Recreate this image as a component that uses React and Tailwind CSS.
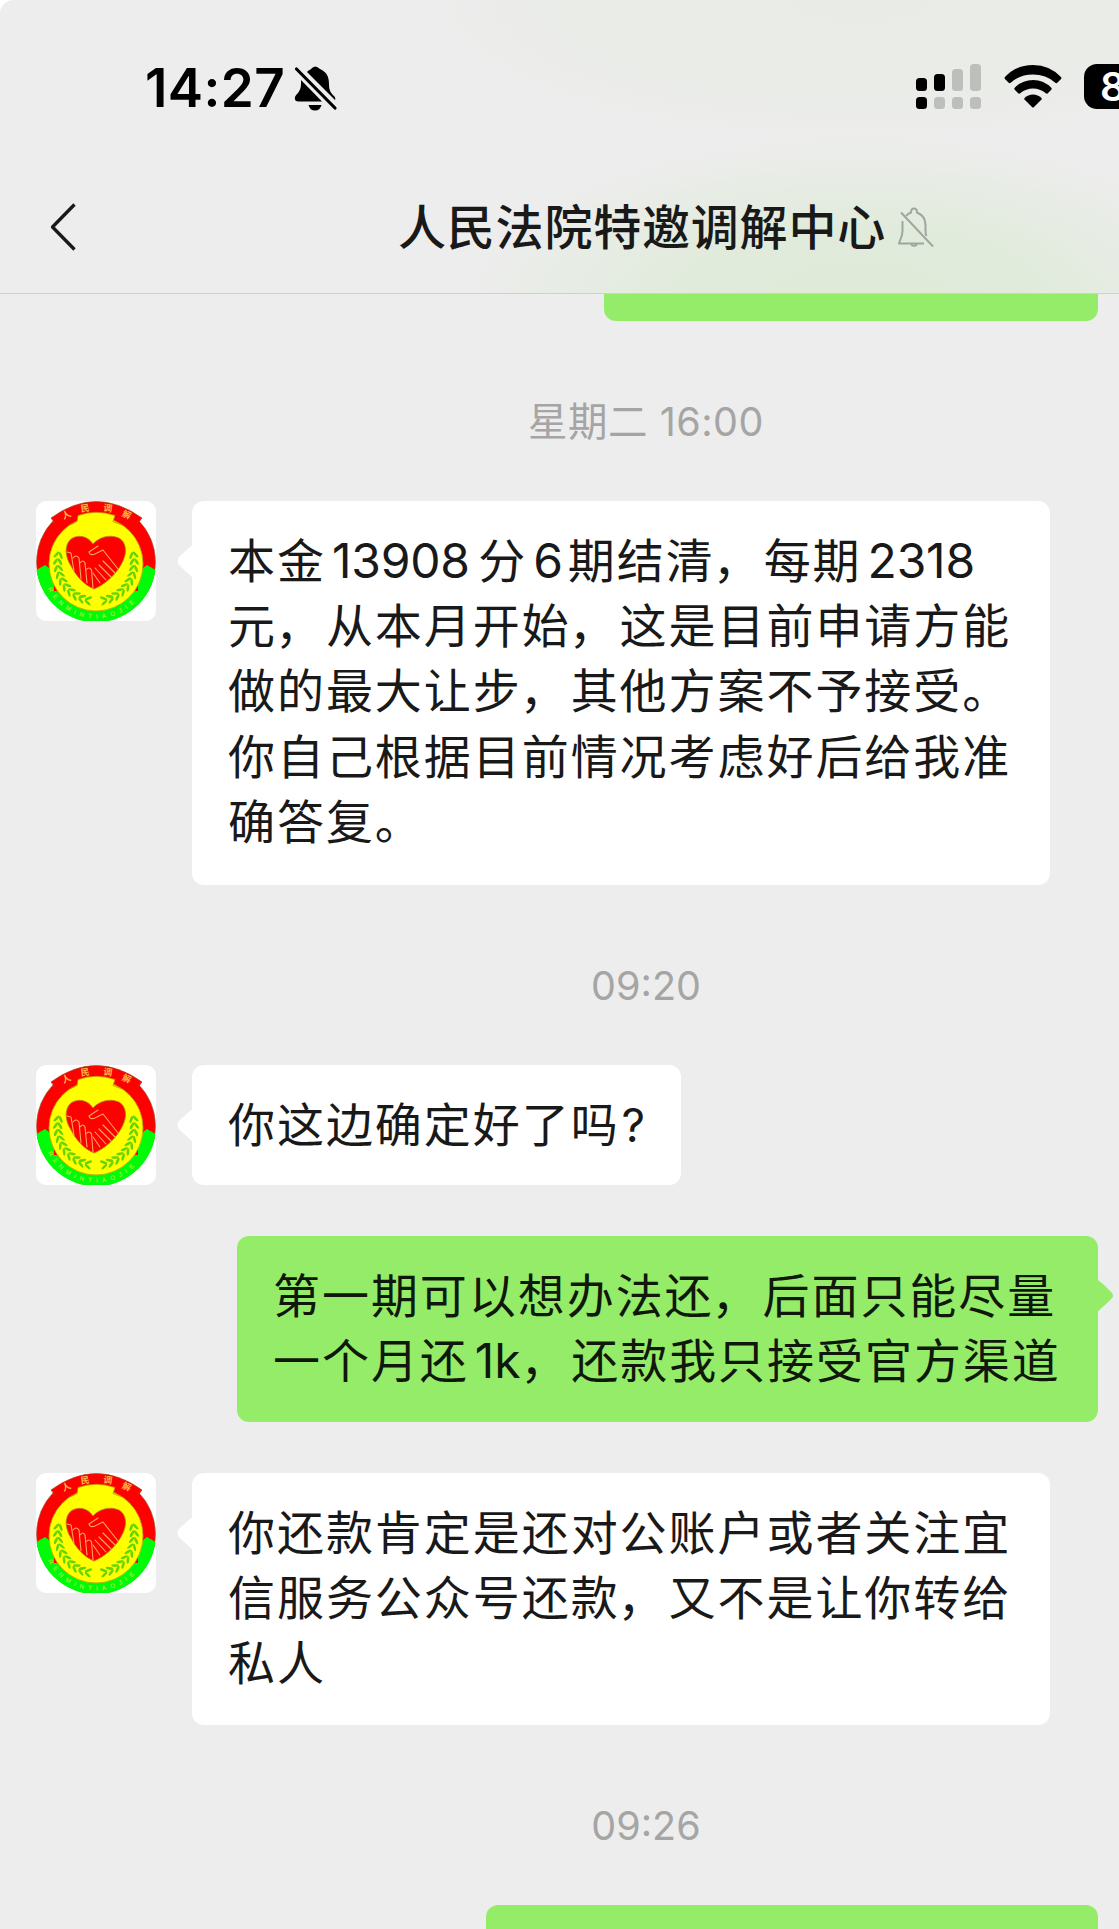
import React from 'react';

const messages = [
  { type: 'time', text: '星期二 16:00', className: 'mt-[81px] tracking-[0.5px]' },
  {
    type: 'left',
    className: 'mt-[59px] h-[384px]',
    width: 'w-[858px]',
    lines: [
      '本金13908分6期结清，每期2318',
      '元，从本月开始，这是目前申请方能',
      '做的最大让步，其他方案不予接受。',
      '你自己根据目前情况考虑好后给我准',
      '确答复。'
    ]
  },
  { type: 'time', text: '09:20', className: 'mt-[81px]' },
  { type: 'left', className: 'mt-[59px] h-[120px]', width: 'w-[489px]', lines: ['你这边确定好了吗?'] },
  {
    type: 'right',
    className: 'mt-[51px] h-[186px]',
    width: 'w-[861px]',
    lines: ['第一期可以想办法还，后面只能尽量', '一个月还1k，还款我只接受官方渠道']
  },
  {
    type: 'left',
    className: 'mt-[51px] h-[252px]',
    width: 'w-[858px]',
    lines: ['你还款肯定是还对公账户或者关注宜', '信服务公众号还款，又不是让你转给', '私人']
  },
  { type: 'time', text: '09:26', className: 'mt-[81px]' }
];

// Leaf positions along the wreath, in degrees from the bottom of the badge
const leaves = [12, 22, 32, 42, 52, 62, 72, 82, 92, 102];

function Wreath() {
  return (
    <g fill="#62d400">
      {leaves.map((deg) => (
        <g key={deg} transform={`rotate(${deg} 60 62)`}>
          <ellipse cx="60" cy="102.500" rx="3.800" ry="1.300" transform="rotate(32 60 102.500)" />
          <ellipse cx="60" cy="98" rx="3.800" ry="1.300" transform="rotate(-32 60 98)" />
        </g>
      ))}
    </g>
  );
}

function Avatar() {
  return (
    <svg viewBox="0 0 120 120" className="h-[120px] w-[120px] shrink-0 rounded-[10px] bg-white">
      <defs>
        <path id="ringText" d="M10 84 A 54 54 0 0 0 110 84" />
      </defs>
      {/* Ring and banner */}
      <circle cx="60" cy="61" r="59.5" fill="#fe0000" stroke="#8f6a3a" strokeWidth="0.6" />
      <path d="M15 17 Q60 -16 106 17 L102 23 L105 32 L16 32 L19 22 Z" fill="#fe0000" />
      <path d="M19 22.500 L15 17 Q60 -16 106 17 L101 22.500" fill="none" stroke="#a44a2a" strokeWidth="0.7" />
      <path d="M0.5 69 L9 64 L18 71 L18 90 L102 90 L102 71 L111 64 L119.5 69 A60 60 0 0 1 0.5 69 Z" fill="#00fb08" />
      <circle cx="60" cy="63" r="47" fill="#ffff00" stroke="#b9a600" strokeWidth="0.8" />
      <path d="M41 21 L42 14.5 Q60 8 79 14.5 L77 21 L84 30 H36 Z" fill="#ffff00" />
      <path d="M34 24 L41 20.5 L42 14.5 Q60 8 79 14.5 L77 20.5 L86 24" fill="none" stroke="#c48a00" strokeWidth="0.8" />

      <g fill="#ffb648" fontFamily="Noto Sans CJK SC" fontWeight="700" fontSize="9" textAnchor="middle">
        <text x="30" y="17" transform="rotate(-24 30 13)">人</text>
        <text x="49" y="10.500" transform="rotate(-8 49 7)">民</text>
        <text x="72" y="10.500" transform="rotate(8 72 7)">调</text>
        <text x="91" y="17" transform="rotate(24 91 13)">解</text>
      </g>

      <Wreath />
      <g transform="matrix(-1 0 0 1 120 0)">
        <Wreath />
      </g>

      {/* Heart with the handshake */}
      <path
        d="M57 43 C52 35 42 33 35 38 C28 44 29 56 35 65 C40 75 48 84 58 88 C68 84 80 74 86 62 C92 51 90 41 83 37 C74 33 63 36 57 43 Z"
        fill="#fe0000"
        stroke="#b98a00"
        strokeWidth="0.8"
      />
      <g fill="none" stroke="#ffa45c" strokeWidth="1.1" strokeLinecap="round" strokeLinejoin="round">
        <path d="M62 45 L53 51 Q54 55 59 53 L67 49 L82 68" />
        <path d="M31 51 L35 52 L38 70 M37 57 Q40 53 43 57 L45 78 M44 62 Q47 58 49 62 L51 82 M50 69 Q53 65 55.500 69 L57 87" />
        <path d="M57 72 L64 82 M59 67 L70 79 M63 64 L75 76 M67 60 L79 72" />
      </g>

      <text fill="#98ee30" fontFamily="Liberation Sans" fontWeight="700" fontSize="6.500" letterSpacing="4.300">
        <textPath href="#ringText" startOffset="4">RENMINTIAOJIE</textPath>
      </text>
    </svg>
  );
}

function partClass(part) {
  if (part === '，') return 'relative right-[2px]';
  if (part === '?') return "ml-[2px] font-['Inter'] text-[46px] tracking-normal";
  if (part.endsWith('k')) return "ml-[6px] mr-[2px] font-['Inter'] text-[48px] tracking-[-0.2px]";
  if (part.length === 1 && /\d/.test(part)) return "ml-[6px] mr-[5px] font-['Inter'] text-[48px] tracking-[-0.2px]";
  if (/^\d/.test(part)) return "ml-[6px] mr-[8.5px] font-['Inter'] text-[48px] tracking-[-0.2px]";
  return '';
}

function Line({ text }) {
  return (
    <div className="h-[65.2px] whitespace-nowrap">
      {text.split(/([0-9k?]+|，)/).map((part, i) => (
        <span key={i} className={partClass(part)}>{part}</span>
      ))}
    </div>
  );
}

function Tail({ side }) {
  return side === 'left' ? (
    <svg viewBox="0 0 16 40" className="absolute top-[40px] -left-[15px] h-[40px] w-[16px] fill-white">
      <path d="M16 3 C14 6 9 9 2 16 Q-1 20 2 24 C9 31 14 34 16 38 Z" />
    </svg>
  ) : (
    <svg viewBox="0 0 17 40" className="absolute top-[40px] -right-[16px] h-[40px] w-[17px] fill-[#95ec69]">
      <path d="M0 3 C2 5 8 9 15 17 Q17 20 15 22 C8 30 3 32 0 37 Z" />
    </svg>
  );
}

function Message({ item }) {
  if (item.type === 'time') {
    return (
      <div className={`flex h-[40px] w-[1290px] items-center justify-center pt-[2px] pl-[2px] text-[39.5px] text-[#a5a5a5] ${item.className}`}>
        {item.text}
      </div>
    );
  }

  const isLeft = item.type === 'left';
  return (
    <div className={`flex ${isLeft ? 'gap-[36px] pl-[36px]' : 'justify-end pr-[21px]'} ${item.className}`}>
      {isLeft && <Avatar />}
      <div
        className={`relative h-full rounded-[12px] pt-[27px] pl-[36px] text-[47px] leading-[65.2px] tracking-[1.95px] ${item.width} ${
          isLeft ? 'bg-white text-[#191919]' : 'bg-[#95ec69] text-[#0f180b]'
        }`}
      >
        <Tail side={item.type} />
        {item.lines.map((line) => (
          <Line key={line} text={line} />
        ))}
      </div>
    </div>
  );
}

function StatusBar() {
  return (
    <div className="flex h-[175px] items-start pt-[64px] pl-[145px] text-black">
      <div className="pt-px text-[53px] leading-[46px] font-semibold tracking-[0.4px]">14:27</div>
      <svg viewBox="0 0 44 46" className="mt-[1px] ml-[9px] h-[46px] w-[44px]">
        <path d="M13 7 C14 5.500 16 5 17 4 Q21 -1 26 4 C33 7 35 12 35 19 C35 26 37 28 40 31 Q42 33 41 35 Z" />
        <path d="M7 15 L28 36.500 H4 Q0 36 1 32 C2 29 7 27 7 19 Z" />
        <path d="M14.500 40 H27.500 Q26 45.500 21 45.500 Q16 45.500 14.500 40 Z" />
        <path d="M2.500 4 L41 43" stroke="#000" strokeWidth="3.200" strokeLinecap="round" />
      </svg>
      <div className="ml-auto flex">
        {/* Dual SIM signal */}
        <svg viewBox="0 0 65 45" className="h-[45px] w-[65px]">
          <rect x="0" y="14" width="11" height="13" rx="3.500" />
          <rect x="18" y="10" width="11" height="17" rx="3.500" />
          <g fill="#bdbfbc">
            <rect x="36" y="5" width="11" height="22" rx="3.500" />
            <rect x="54" y="0" width="11" height="27" rx="3.500" />
            <rect x="18" y="33" width="11" height="12" rx="3.500" />
            <rect x="36" y="33" width="11" height="12" rx="3.500" />
            <rect x="54" y="33" width="11" height="12" rx="3.500" />
          </g>
          <rect x="0" y="33" width="11" height="12" rx="3.500" />
        </svg>
        <svg viewBox="0 0 58 43" className="mt-[1px] ml-[23px] h-[43px] w-[58px]">
          <path d="M0.500 12.500 Q12 0 29 0 Q46 0 57.500 12.500 Q57.500 14 56 15 L53 18 Q52 18.500 51 17.500 Q42 9.500 29 9.500 Q16 9.500 7 17.500 Q6 18.500 5 18 L2 15 Q0.500 14 0.500 12.500 Z" />
          <path d="M10.500 23 Q18 15 29 15 Q40 15 47.500 23 Q48 24 47 25 L43.500 28.500 Q42.500 29 41.500 28 Q36 23.500 29 23.500 Q22 23.500 16.500 28 Q15.500 29 14.500 28.500 L11 25 Q10 24 10.500 23 Z" />
          <path d="M20.500 33 Q24 29.500 29 29.500 Q34 29.500 37.500 33 Q38 34 37.500 34.500 L30 42 Q29 43 28 42 L20.500 34.500 Q20 34 20.500 33 Z" />
        </svg>
        <div className="ml-[22px] h-[45px] w-[35px] overflow-hidden rounded-l-[13px] bg-black pl-[16px] text-[40px] leading-[45px] font-semibold text-white">
          8
        </div>
      </div>
    </div>
  );
}

export default function App() {
  return (
    <div className="h-[1929px] w-[1119px] overflow-hidden bg-white font-['Inter','Noto_Sans_CJK_SC',sans-serif]">
      <div className="flex h-full flex-col rounded-tl-[14px] bg-[#ededed]">
        <header className="h-[294px] shrink-0 rounded-tl-[14px] border-b border-[#cfd1ce] bg-[radial-gradient(ellipse_400px_165px_at_860px_300px,#dfead7_0%,#e1ebdc_45%,#e7ece4_72%,transparent_100%),radial-gradient(ellipse_460px_150px_at_860px_0px,#e9ece6_0%,#eaece8_60%,transparent_100%)]">
          <StatusBar />
          <div className="flex h-[104px] items-center">
            <svg viewBox="0 0 26 48" className="ml-[50px] h-[48px] w-[26px] fill-none stroke-[#191919] stroke-[3.3]">
              <path d="M24.500 1.500 L2.500 24 L24.500 46.500" strokeLinejoin="round" />
            </svg>
            <h1 className="ml-[322px] pt-[2px] text-[48px] leading-none font-medium tracking-[0.8px] whitespace-nowrap text-[#191919]">
              人民法院特邀调解中心
            </h1>
            <svg viewBox="0 0 36 40" className="ml-[12px] h-[40px] w-[36px] fill-none stroke-[#a0a5a0] stroke-2">
              <path d="M4.500 14 V24 C4.500 30 2 32 1 36.500 H26" strokeLinejoin="round" />
              <path d="M8 9 Q10 6.500 13 5.500 Q13 1.500 16 1.500 Q19 1.500 19 5.500 C25 8 27.500 12 27.500 18 V24 Q27.500 27 28.500 29" />
              <path d="M3 5.500 L35 39.500" />
              <path d="M13 37.500 Q16 40 19 37.500" />
            </svg>
          </div>
        </header>

        <main className="flex min-h-0 flex-1 flex-col overflow-hidden">
          <div className="mr-[21px] h-[27px] w-[494px] shrink-0 self-end rounded-b-[12px] bg-[#95ec69]" />
          {messages.map((item, i) => (
            <Message key={i} item={item} />
          ))}
          <div className="mt-[59px] mr-[21px] h-[24px] w-[612px] shrink-0 self-end rounded-t-[12px] bg-[#95ec69]" />
        </main>
      </div>
    </div>
  );
}
